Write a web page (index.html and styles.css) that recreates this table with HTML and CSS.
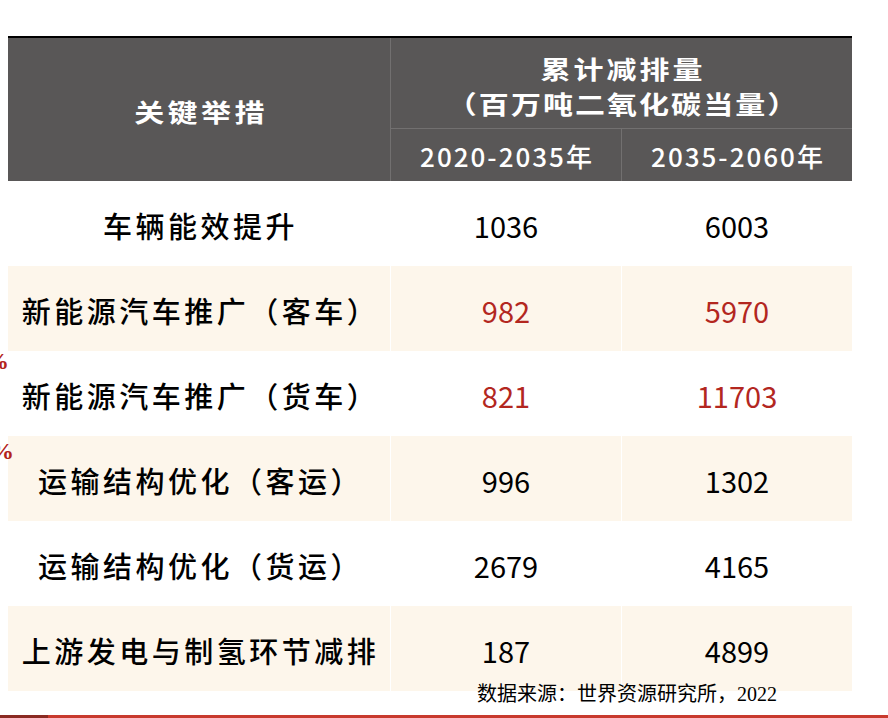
FILE: index.html
```html
<!DOCTYPE html>
<html lang="zh-CN">
<head>
<meta charset="utf-8">
<title>关键举措 累计减排量</title>
<link rel="stylesheet" href="styles.css">
</head>
<body>
<div class="page">
  <span class="pct pct-a">%</span>
  <span class="pct pct-b">%</span>
  <div class="table">
    <div class="head">
      <div class="hcell h-key"><span class="stretch">关键举措</span></div>
      <div class="hcell h-group">
        <span class="stretch h-l1">累计减排量</span>
        <span class="stretch h-l2">（百万吨二氧化碳当量）</span>
      </div>
      <div class="hcell h-year">2020-2035年</div>
      <div class="hcell h-year">2035-2060年</div>
    </div>
    <div class="row">
      <div class="cell name">车辆能效提升</div>
      <div class="cell num">1036</div>
      <div class="cell num">6003</div>
    </div>
    <div class="row alt">
      <div class="cell name">新能源汽车推广（客车）</div>
      <div class="cell num red">982</div>
      <div class="cell num red">5970</div>
    </div>
    <div class="row">
      <div class="cell name">新能源汽车推广（货车）</div>
      <div class="cell num red">821</div>
      <div class="cell num red">11703</div>
    </div>
    <div class="row alt">
      <div class="cell name">运输结构优化（客运）</div>
      <div class="cell num">996</div>
      <div class="cell num">1302</div>
    </div>
    <div class="row">
      <div class="cell name">运输结构优化（货运）</div>
      <div class="cell num">2679</div>
      <div class="cell num">4165</div>
    </div>
    <div class="row alt">
      <div class="cell name">上游发电与制氢环节减排</div>
      <div class="cell num">187</div>
      <div class="cell num">4899</div>
    </div>
  </div>
  <div class="source">数据来源：世界资源研究所，2022</div>
  <div class="bar"><span class="bar-dark"></span></div>
</div>
</body>
</html>
```

FILE: styles.css
```css
html, body {
  margin: 0;
  padding: 0;
  background: #ffffff;
}

.page {
  position: relative;
  width: 888px;
  height: 718px;
  overflow: hidden;
  display: flex;
  flex-direction: column;
  font-family: "Noto Sans CJK SC", "Noto Sans", sans-serif;
  color: #000;
}

.pct {
  position: absolute;
  font-family: "Liberation Serif", serif;
  font-weight: bold;
  font-size: 24px;
  line-height: 1;
  color: #b3241c;
}
.pct-a { left: -15px; top: 349px; }
.pct-b { left: -10px; top: 439px; }

.table {
  margin: 36px 0 0 8px;
  width: 844px;
  border-top: 2px solid #000;
}

.head {
  display: grid;
  grid-template-columns: 382px 230px 230px;
  grid-template-rows: 90px 52px;
  column-gap: 1px;
  row-gap: 1px;
  background: #727070;
  color: #fff;
}

.hcell {
  background: #595757;
  display: flex;
  align-items: center;
  justify-content: center;
  font-weight: 700;
}

.stretch {
  display: inline-block;
  font-size: 25px;
  transform: scaleX(1.2);
}

.h-key {
  grid-row: 1 / 3;
  padding-top: 3px;
}

.h-key .stretch {
  letter-spacing: 2.9px;
  padding-left: 3px;
}

.h-group {
  grid-column: 2 / 4;
  flex-direction: column;
  padding-top: 5px;
  line-height: 35px;
}

.h-l1 {
  letter-spacing: 2.5px;
  padding-left: 3px;
}

.h-l2 {
  letter-spacing: 1.7px;
  padding-left: 2px;
}

.h-year {
  font-size: 26px;
  font-weight: 500;
  letter-spacing: 2px;
  padding: 0 0 0 2px;
}

.row {
  display: grid;
  grid-template-columns: 382px 230px 230px;
  column-gap: 1px;
  height: 85px;
}

.row.alt .cell {
  background: #fdf6eb;
}

.cell {
  display: flex;
  align-items: center;
  justify-content: center;
  padding-top: 2px;
}

.name {
  font-size: 29px;
  font-weight: 500;
  letter-spacing: 3.5px;
  padding-left: 3px;
}

.num {
  font-size: 29px;
}

.red {
  color: #b3271f;
}

.source {
  margin: -9px 0 0 477px;
  font-family: "Liberation Serif", "Noto Sans CJK SC", serif;
  font-size: 20px;
  line-height: 24px;
  color: #000;
  position: relative;
}

.bar {
  margin-top: auto;
  height: 3px;
  background: #c83a2d;
  display: flex;
}

.bar-dark {
  width: 48px;
  background: #8a2a22;
}
```
